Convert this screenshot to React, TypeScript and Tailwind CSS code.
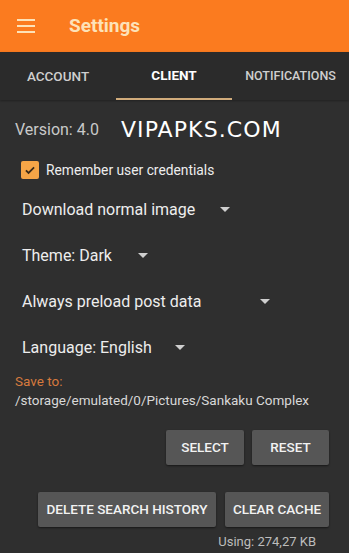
const font = { fontFamily: "Roboto, 'Liberation Sans', sans-serif" };

function Arrow() {
  return <span className="ml-auto inline-block h-0 w-0 border-x-[5px] border-t-[5px] border-x-transparent border-t-[#cfcfcf]" />;
}

function Dropdown({ label, width }: { label: string; width: string }) {
  return (
    <div className={`flex h-[46px] items-center pl-[22px] pr-2 ${width}`}>
      <span className="text-[16px] text-[#ededed]">{label}</span>
      <Arrow />
    </div>
  );
}

function Btn({ children, width }: { children: string; width: string }) {
  return (
    <button
      className={`h-[35px] rounded-[2px] bg-[#565656] text-[13.5px] font-medium text-[#f2f2f2] shadow-[0_1px_2px_rgba(0,0,0,0.5)] ${width}`}
    >
      {children}
    </button>
  );
}

export default function App() {
  return (
    <div className="flex h-[553px] w-[349px] flex-col overflow-hidden bg-[#2f2f2f]" style={font}>
      <header className="flex h-[52px] shrink-0 items-center bg-[#fb7b1f]">
        <div className="ml-[17px] flex w-[18px] flex-col gap-[4px]">
          <span className="h-[2px] bg-[#fde2b8]" />
          <span className="h-[2px] bg-[#fde2b8]" />
          <span className="h-[2px] bg-[#fde2b8]" />
        </div>
        <h1 className="ml-[34px] text-[19px] font-bold text-[#fde2b8]">Settings</h1>
      </header>

      <nav className="flex h-[48px] shrink-0 bg-[#2b2b2b] shadow-[0_1px_2px_rgba(0,0,0,0.3)]">
        <div className="flex w-[116px] items-center justify-center text-[13.5px] font-medium text-[#cfcfcf]">ACCOUNT</div>
        <div className="flex w-[116px] flex-col items-center">
          <span className="flex flex-1 items-center text-[13.5px] font-bold text-white">CLIENT</span>
          <span className="h-[2px] w-full bg-[#d0ab7b]" />
        </div>
        <div className="flex flex-1 items-center justify-center text-[12.5px] font-medium text-[#cfcfcf]">NOTIFICATIONS</div>
      </nav>

      <div className="flex items-center pl-[15px] pt-[13px]">
        <span className="text-[16px] text-[#c9c9c9]">Version: 4.0</span>
        <span className="ml-[22px] text-[22px] tracking-[0.05em] text-white" style={{ fontFamily: "'DejaVu Sans', sans-serif" }}>
          VIPAPKS.COM
        </span>
      </div>

      <label className="mt-[14px] flex items-center pl-[21px]">
        <span className="flex h-[18px] w-[18px] items-center justify-center rounded-[2px] bg-[#f5a547]">
          <svg viewBox="0 0 24 24" className="h-[14px] w-[14px]" fill="none" stroke="#3a2a18" strokeWidth="3">
            <path d="M5 12.5l4.5 4.5L19 7.5" />
          </svg>
        </span>
        <span className="ml-[7px] text-[13.8px] text-[#ededed]">Remember user credentials</span>
      </label>

      <div className="mt-[6px] flex flex-col">
        <Dropdown label="Download normal image" width="w-[238px]" />
        <Dropdown label="Theme: Dark" width="w-[156px]" />
        <Dropdown label="Always preload post data" width="w-[278px]" />
        <Dropdown label="Language: English" width="w-[193px]" />
      </div>

      <div className="mt-[1px] pl-[15px] text-[13.5px] leading-[19px]">
        <div className="text-[#d67a3e]">Save to:</div>
        <div className="text-[#d8d8d8]">/storage/emulated/0/Pictures/Sankaku Complex</div>
      </div>

      <div className="mt-[20px] flex justify-end gap-[8px] pr-[20px]">
        <Btn width="w-[78px]">SELECT</Btn>
        <Btn width="w-[77px]">RESET</Btn>
      </div>

      <div className="mt-[27px] flex justify-end gap-[9px] pr-[20px]">
        <Btn width="w-[178px]">DELETE SEARCH HISTORY</Btn>
        <Btn width="w-[104px]">CLEAR CACHE</Btn>
      </div>

      <div className="mt-[5px] flex justify-end pr-[33px] text-[13px] text-[#bdbdbd]">Using: 274,27 KB</div>
    </div>
  );
}
